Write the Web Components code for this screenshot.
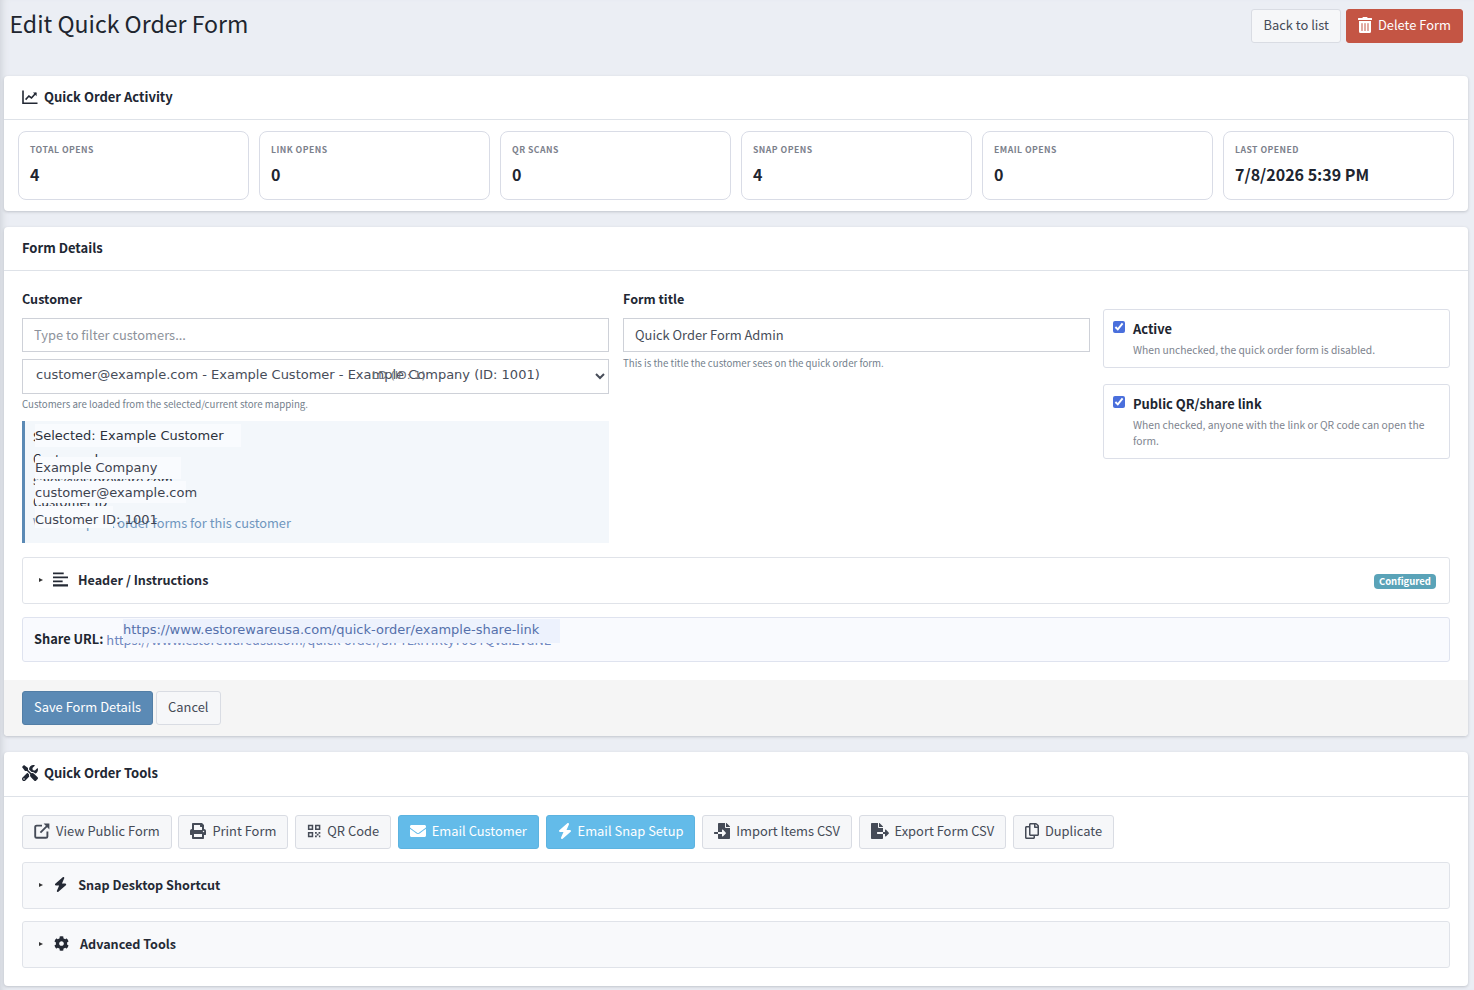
<!DOCTYPE html>
<html lang="en">
<head>
<meta charset="utf-8">
<title>Edit Quick Order Form</title>
<style>
  html, body { margin: 0; padding: 0; background: #ebeef4; }
  body { font-family: "Noto Sans CJK SC", "Liberation Sans", sans-serif; color: #212733; font-size: 13px; }
</style>
</head>
<body>

<qo-page>
  <span slot="title">Edit Quick Order Form</span>
  <qo-btn slot="actions">Back to list</qo-btn>
  <qo-btn slot="actions" variant="danger" icon="trash">Delete Form</qo-btn>

  <qo-card heading="Quick Order Activity" icon="chart" compact>
    <qo-stats>
      <qo-stat label="Total opens" value="4"></qo-stat>
      <qo-stat label="Link opens" value="0"></qo-stat>
      <qo-stat label="QR scans" value="0"></qo-stat>
      <qo-stat label="Snap opens" value="4"></qo-stat>
      <qo-stat label="Email opens" value="0"></qo-stat>
      <qo-stat label="Last opened" value="7/8/2026 5:39 PM"></qo-stat>
    </qo-stats>
  </qo-card>

  <qo-card heading="Form Details">
    <qo-form-details></qo-form-details>
    <qo-fold label="Header / Instructions" icon="align" tone="plain" badge="Configured"></qo-fold>
    <qo-share></qo-share>
    <qo-btn slot="footer" variant="primary">Save Form Details</qo-btn>
    <qo-btn slot="footer">Cancel</qo-btn>
  </qo-card>

  <qo-card heading="Quick Order Tools" icon="tools" last>
    <qo-toolbar>
      <qo-btn icon="external">View Public Form</qo-btn>
      <qo-btn icon="print">Print Form</qo-btn>
      <qo-btn icon="qr">QR Code</qo-btn>
      <qo-btn variant="info" icon="mail">Email Customer</qo-btn>
      <qo-btn variant="info" icon="bolt">Email Snap Setup</qo-btn>
      <qo-btn icon="import">Import Items CSV</qo-btn>
      <qo-btn icon="export">Export Form CSV</qo-btn>
      <qo-btn icon="copy">Duplicate</qo-btn>
    </qo-toolbar>
    <qo-fold label="Snap Desktop Shortcut" icon="bolt"></qo-fold>
    <qo-fold label="Advanced Tools" icon="cog" last></qo-fold>
  </qo-card>
</qo-page>

<script>
const ICONS = {
  trash: ['0 0 448 512', '<path d="M32 464a48 48 0 0 0 48 48h288a48 48 0 0 0 48-48V128H32zm272-256a16 16 0 0 1 32 0v224a16 16 0 0 1-32 0zm-96 0a16 16 0 0 1 32 0v224a16 16 0 0 1-32 0zm-96 0a16 16 0 0 1 32 0v224a16 16 0 0 1-32 0zM432 32H312l-9.4-18.7A24 24 0 0 0 281.1 0H166.8a23.72 23.72 0 0 0-21.4 13.3L136 32H16A16 16 0 0 0 0 48v32a16 16 0 0 0 16 16h416a16 16 0 0 0 16-16V48a16 16 0 0 0-16-16z"/>'],
  chart: ['0 0 16 16', '<path d="M1 1.5v12.7h14.5" fill="none" stroke="currentColor" stroke-width="1.6"/><path d="M3.6 10.6l3.3-3.6 2.6 2 4.4-5" fill="none" stroke="currentColor" stroke-width="1.6"/><path d="M11 3.6h3.6v3.6z"/>'],
  tools: ['0 0 512 512', '<path d="M501.1 395.7L384 278.6c-23.1-23.1-57.6-27.6-85.4-13.9L192 158.1V96L64 0 0 64l96 128h62.1l106.6 106.6c-13.6 27.8-9.2 62.3 13.9 85.4l117.1 117.1c14.6 14.6 38.2 14.6 52.7 0l52.7-52.7c14.5-14.6 14.5-38.2 0-52.7zM331.7 225c28.3 0 54.9 11 74.9 31l19.4 19.4c15.8-6.9 30.8-16.5 43.8-29.5 37.1-37.1 49.7-89.3 37.9-136.7-2.2-9-13.5-12.1-20.1-5.5l-74.4 74.4-67.9-11.3L334 98.9l74.4-74.4c6.6-6.6 3.4-17.9-5.7-20.2-47.4-11.7-99.6.9-136.6 37.9-28.5 28.5-41.9 66.1-41.2 103.6l82.1 82.1c8.1-1.9 16.5-2.9 24.7-2.9zm-103.9 82l-56.7-56.7L18.7 402.8c-25 25-25 65.5 0 90.5s65.5 25 90.5 0l123.6-123.6c-7.6-19.9-9.9-41.6-5-62.7zM64 472c-13.2 0-24-10.8-24-24 0-13.3 10.7-24 24-24s24 10.7 24 24c0 13.2-10.7 24-24 24z"/>'],
  external: ['0 0 16 16', '<path d="M8 2.6H2.6a1.4 1.4 0 0 0-1.4 1.4v9.4a1.4 1.4 0 0 0 1.4 1.4H12a1.4 1.4 0 0 0 1.4-1.4V8.6" fill="none" stroke="currentColor" stroke-width="1.9"/><path d="M6.4 9.6l7-7" fill="none" stroke="currentColor" stroke-width="1.9"/><path d="M9.6.6h5.8v5.8z"/>'],
  print: ['0 0 512 512', '<path d="M448 192V77.25c0-8.49-3.37-16.62-9.37-22.63L393.37 9.37c-6-6-14.14-9.37-22.63-9.37H96C78.33 0 64 14.33 64 32v160c-35.35 0-64 28.65-64 64v112c0 8.84 7.16 16 16 16h48v96c0 17.67 14.33 32 32 32h320c17.67 0 32-14.33 32-32v-96h48c8.84 0 16-7.16 16-16V256c0-35.35-28.65-64-64-64zm-64 256H128v-96h256v96zm0-224H128V64h192v48c0 8.84 7.16 16 16 16h48v96zm48 72c-13.25 0-24-10.75-24-24 0-13.26 10.75-24 24-24s24 10.74 24 24c0 13.25-10.75 24-24 24z"/>'],
  qr: ['0 -1 16 18', '<path fill-rule="evenodd" d="M1 1h6v6H1zm1.7 1.7v2.6h2.6V2.7zM9 1h6v6H9zm1.7 1.7v2.6h2.6V2.7zM1 9h6v6H1zm1.7 1.7v2.6h2.6v-2.6z"/><path d="M9 9h2v2H9zM11 11h2v2h-2zM13 9h2v2h-2zM9 13h2v2H9zM13.4 13H15v2h-1.6z"/>'],
  mail: ['0 0 512 512', '<path d="M502.3 190.8c3.9-3.1 9.7-.2 9.7 4.7V400c0 26.5-21.5 48-48 48H48c-26.5 0-48-21.5-48-48V195.6c0-5 5.7-7.8 9.7-4.7 22.4 17.4 52.1 39.5 154.1 113.6 21.1 15.4 56.7 47.8 92.2 47.6 35.7.3 72-32.8 92.3-47.6 102-74.1 131.6-96.3 154-113.7zM256 320c23.2.4 56.6-29.2 73.4-41.4 132.7-96.3 142.8-104.7 173.4-128.7 5.8-4.5 9.2-11.5 9.2-18.9v-19c0-26.5-21.5-48-48-48H48C21.5 64 0 85.5 0 112v19c0 7.4 3.4 14.3 9.2 18.9 30.6 23.9 40.7 32.4 173.4 128.7 16.8 12.2 50.2 41.8 73.4 41.4z"/>'],
  bolt: ['0 0 448 512', '<path d="M349.4 44.6c5.9-13.7 1.5-29.7-10.6-38.5s-28.6-8-39.9 1.8l-256 224c-10 8.8-13.6 22.9-8.9 35.3S50.7 288 64 288H175.5L98.6 467.4c-5.9 13.7-1.5 29.7 10.6 38.5s28.6 8 39.9-1.8l256-224c10-8.8 13.6-22.9 8.9-35.3s-16.6-20.7-30-20.7H272.5L349.4 44.6z"/>'],
  import: ['0 0 512 512', '<path d="M16 288c-8.8 0-16 7.2-16 16v32c0 8.8 7.2 16 16 16h112v-64zm489-183L407.1 7c-4.5-4.5-10.6-7-17-7H384v128h128v-6.1c0-6.3-2.5-12.4-7-16.9zm-153 31V0H152c-13.3 0-24 10.7-24 24v264h128v-65.2c0-14.3 17.3-21.4 27.4-11.3L379 308c6.6 6.7 6.6 17.4 0 24l-95.7 96.4c-10.1 10.1-27.4 3-27.4-11.3V352H128v136c0 13.3 10.7 24 24 24h336c13.3 0 24-10.7 24-24V160H376c-13.2 0-24-10.8-24-24z"/>'],
  export: ['0 0 576 512', '<path d="M384 121.9c0-6.3-2.5-12.4-7-16.9L279.1 7c-4.5-4.5-10.6-7-17-7H256v128h128zM571 308l-95.7-96.4c-10.1-10.1-27.4-3-27.4 11.3V288h-64v64h64v65.2c0 14.3 17.3 21.4 27.4 11.3L571 332c6.6-6.6 6.6-17.4 0-24zm-379 28v-32c0-8.8 7.2-16 16-16h176V160H248c-13.2 0-24-10.8-24-24V0H24C10.7 0 0 10.7 0 24v464c0 13.3 10.7 24 24 24h336c13.3 0 24-10.7 24-24V352H208c-8.8 0-16-7.2-16-16z"/>'],
  copy: ['0 0 448 512', '<path d="M433.941 65.941l-51.882-51.882A48 48 0 0 0 348.118 0H176c-26.51 0-48 21.49-48 48v48H48c-26.51 0-48 21.49-48 48v320c0 26.51 21.49 48 48 48h224c26.51 0 48-21.49 48-48v-48h80c26.51 0 48-21.49 48-48V99.882a48 48 0 0 0-14.059-33.941zM266 464H54a6 6 0 0 1-6-6V150a6 6 0 0 1 6-6h74v224c0 26.51 21.49 48 48 48h96v42a6 6 0 0 1-6 6zm128-96H182a6 6 0 0 1-6-6V54a6 6 0 0 1 6-6h106v88c0 13.255 10.745 24 24 24h88v202a6 6 0 0 1-6 6zm6-256h-64V48h9.632c1.591 0 3.117.632 4.243 1.757l48.368 48.368a6 6 0 0 1 1.757 4.243V112z"/>'],
  cog: ['0 0 512 512', '<path d="M487.4 315.7l-42.6-24.6c4.3-23.2 4.3-47 0-70.2l42.6-24.6c4.9-2.8 7.1-8.6 5.5-14-11.1-35.6-30-67.8-54.7-94.6-3.8-4.1-10-5.1-14.8-2.3L380.8 110c-17.9-15.4-38.5-27.3-60.8-35.1V25.8c0-5.6-3.9-10.5-9.4-11.7-36.7-8.2-74.3-7.8-109.2 0-5.5 1.2-9.4 6.1-9.4 11.7V75c-22.2 7.9-42.8 19.8-60.8 35.1L88.7 85.5c-4.9-2.8-11-1.9-14.8 2.3-24.7 26.7-43.6 58.9-54.7 94.6-1.7 5.4.6 11.2 5.5 14L67.3 221c-4.3 23.2-4.3 47 0 70.2l-42.6 24.6c-4.9 2.8-7.1 8.6-5.5 14 11.1 35.6 30 67.8 54.7 94.6 3.8 4.1 10 5.1 14.8 2.3l42.6-24.6c17.9 15.4 38.5 27.3 60.8 35.1v49.2c0 5.6 3.9 10.5 9.4 11.7 36.7 8.2 74.3 7.8 109.2 0 5.5-1.2 9.4-6.1 9.4-11.7v-49.2c22.2-7.9 42.8-19.8 60.8-35.1l42.6 24.6c4.9 2.8 11 1.9 14.8-2.3 24.7-26.7 43.6-58.9 54.7-94.6 1.5-5.5-.7-11.3-5.6-14.1zM256 336c-44.1 0-80-35.9-80-80s35.9-80 80-80 80 35.9 80 80-35.9 80-80 80z"/>'],
  align: ['0 0 14 14', '<path d="M0 .5h10v1.6H0zM0 4.2h14v1.6H0zM0 7.9h9v1.6H0zM0 11.5h14v2H0z"/>']
};

// width follows the icon's own viewBox, height is the size given
function icon(name, size) {
  const [box, body] = ICONS[name];
  const [, , w, h] = box.split(' ').map(Number);
  return `<svg viewBox="${box}" width="${(size * w / h).toFixed(2)}" height="${size}" fill="currentColor" aria-hidden="true">${body}</svg>`;
}

/** Base class: sets up an open shadow root from the html() result. */
class QoElement extends HTMLElement {
  connectedCallback() {
    if (this.shadowRoot) return;
    this.attachShadow({ mode: 'open' });
    this.shadowRoot.innerHTML = this.html();
  }
}

class QoPage extends QoElement {
  html() {
    return `
      <style>
        :host { display: block; padding: 0 6px 4px 4px; box-shadow: inset 8px 0 8px -7px #c9ccd3; min-height: 986px; }
        header { display: flex; justify-content: space-between; height: 76px; }
        h1 { margin: 4px 0 0 5.5px; font-size: 23.1px; font-weight: 400; line-height: 38px; color: #20252f; }
        .actions { display: flex; gap: 5px; margin: 9px 5px 0 0; align-items: flex-start; }
      </style>
      <header>
        <h1><slot name="title"></slot></h1>
        <div class="actions"><slot name="actions"></slot></div>
      </header>
      <slot></slot>`;
  }
}

class QoCard extends QoElement {
  html() {
    const ic = this.getAttribute('icon');
    return `
      <style>
        :host { display: block; background: #fff; border-radius: 4px; box-shadow: 0 1px 3px rgba(40,45,60,.22); margin-bottom: 16px; overflow: hidden; }
        :host([last]) { margin-bottom: 0; }
        header { display: flex; align-items: center; gap: 6px; height: 41px; padding: 0 18px 2px; border-bottom: 1px solid #dee2e8; font-weight: 700; font-size: 13px; line-height: 20px; color: #212733; }
        :host([last]) header { height: 42px; }
        header svg { display: block; }
        main { padding: 18px 18px 18px; }
        :host([compact]) main { padding: 11px 14px 11px; }
        footer { display: flex; gap: 3px; background: #f5f5f5; padding: 11px 18px; }
        footer:not(.on) { display: none; }
      </style>
      <header>${ic ? icon(ic, 16) : ''}<span>${this.getAttribute('heading')}</span></header>
      <main><slot></slot></main>
      <footer class="${this.querySelector('[slot=footer]') ? 'on' : ''}"><slot name="footer"></slot></footer>`;
  }
}

class QoBtn extends QoElement {
  html() {
    const ic = this.getAttribute('icon');
    return `
      <style>
        :host { display: inline-block; }
        button { display: flex; align-items: center; gap: 6px; height: 34px; box-sizing: border-box; padding: 0 11px 2px; font: inherit; font-size: 12.9px; line-height: 20px; cursor: pointer;
                 background: #f6f7f9; color: #454b57; border: 1px solid #d9dce3; border-radius: 3px; white-space: nowrap; }
        :host([variant=danger]) button { background: #c45544; border-color: #c45544; color: #fff; }
        :host([variant=primary]) button { background: #5b8ab5; border-color: #527ea6; color: #fff; }
        :host([variant=info]) button { background: #63bbe9; border-color: #5cb3e0; color: #fff; }
        svg { display: block; }
      </style>
      <button>${ic ? icon(ic, 16) : ''}<slot></slot></button>`;
  }
}

class QoStats extends QoElement {
  html() {
    return `<style>:host { display: grid; grid-template-columns: repeat(6, 1fr); gap: 10px; }</style><slot></slot>`;
  }
}

class QoStat extends QoElement {
  html() {
    return `
      <style>
        :host { display: block; box-sizing: border-box; height: 69px; padding: 11px 11px; background: #fff; border: 1px solid #d9dce6; border-radius: 8px; }
        .k { font-size: 8.7px; line-height: 14px; font-weight: 700; letter-spacing: .45px; text-transform: uppercase; color: #7c818c; }
        .v { margin-top: 5px; font-size: 16px; line-height: 24px; font-weight: 700; color: #20252f; }
      </style>
      <div class="k">${this.getAttribute('label')}</div>
      <div class="v">${this.getAttribute('value')}</div>`;
  }
}

class QoFormDetails extends QoElement {
  html() {
    return `
      <style>
        :host { display: grid; grid-template-columns: 601px 480px 347px; margin-bottom: 14px; }
        .a { padding-right: 14px; }
        .b { padding-right: 13px; }
        .c { padding-top: 20px; display: flex; flex-direction: column; gap: 16px; }
        label { display: block; font-size: 12.6px; font-weight: 600; line-height: 20px; margin-bottom: 9px; color: #212733; }
        input[type=text], select { display: block; width: 100%; box-sizing: border-box; height: 34px; font: inherit; font-size: 12.9px; padding: 0 11px 2px; color: #474d59;
                 border: 1px solid #ced1d8; background: #fff; border-radius: 0; outline: none; }
        input::placeholder { color: #8d929b; opacity: 1; }
        .sel { position: relative; margin-top: 7px; }
        select { height: 35px; font-family: "DejaVu Sans", sans-serif; font-size: 13px; padding: 0 9px 5px; }
        .residual { position: absolute; left: 350px; top: 10px; font-family: "DejaVu Sans", sans-serif; font-size: 11.2px; line-height: 14px; color: #6a6f79; }
        .hint { font-size: 9.7px; line-height: 16px; color: #73808c; margin: 2px 0 1px; }
        .selected { position: relative; box-sizing: border-box; height: 122px; margin-top: 9px; padding: 5px 0 0 8px; border-left: 3px solid #5b8ab5; background: #f3f7fb; font-size: 13px; line-height: 21.5px; color: #2b303b; overflow: hidden; }
        .selected div { height: 21.5px; white-space: nowrap; }
        .selected a { color: #6f96be; text-decoration: none; font-size: 12.8px; }
        .patch { position: absolute; left: 10px; height: 22px; background: #f9fbfe; font-family: "DejaVu Sans", sans-serif; font-size: 13px; line-height: 22px; color: #3d4350; white-space: nowrap; }
      </style>
      <div class="a">
        <label>Customer</label>
        <input type="text" placeholder="Type to filter customers...">
        <div class="sel">
          <select><option>customer@example.com - Example Customer - Example Company (ID: 1001)</option></select>
          <span class="residual">LD (ID: 1)</span>
        </div>
        <div class="hint">Customers are loaded from the selected/current store mapping.</div>
        <div class="selected">
          <div><b>Selected: Customer</b></div>
          <div>Customer Inc</div>
          <div>sales@estoreware.com</div>
          <div>Customer ID</div>
          <div><a>View all quick order forms for this customer</a></div>
          <span class="patch" style="top:3px;width:206px;height:23px;line-height:24px;color:#2c313c">Selected: Example Customer</span>
          <span class="patch" style="top:36px;width:146px">Example Company</span>
          <span class="patch" style="top:60px;width:151px;line-height:24px">customer@example.com</span>
          <span class="patch" style="top:85px;width:78px;line-height:28px">Customer ID: 1001</span>
        </div>
      </div>
      <div class="b">
        <label>Form title</label>
        <input type="text" value="Quick Order Form Admin">
        <div class="hint" style="margin-top:3px">This is the title the customer sees on the quick order form.</div>
      </div>
      <div class="c">
        <qo-check label="Active" note="When unchecked, the quick order form is disabled."></qo-check>
        <qo-check label="Public QR/share link" note="When checked, anyone with the link or QR code can open the form."></qo-check>
      </div>`;
  }
}

class QoCheck extends QoElement {
  html() {
    return `
      <style>
        :host { display: flex; gap: 8px; box-sizing: border-box; padding: 9px 9px 10px 9px; background: #fff; border: 1px solid #dcdfe8; border-radius: 3px; }
        input { width: 12px; height: 12px; margin: 2px 0 0 0; accent-color: #4a6fdc; flex: none; }
        .t { font-size: 12.9px; line-height: 20px; font-weight: 600; color: #20252f; }
        .n { margin-top: 3px; font-size: 10.3px; line-height: 15.3px; color: #7d838e; }
      </style>
      <input type="checkbox" checked>
      <div><div class="t">${this.getAttribute('label')}</div><div class="n">${this.getAttribute('note')}</div></div>`;
  }
}

class QoFold extends QoElement {
  html() {
    const badge = this.getAttribute('badge');
    return `
      <style>
        :host { display: block; margin-bottom: 12px; }
        :host([last]) { margin-bottom: 0; }
        :host([tone=plain]) { margin-bottom: 13px; }
        details { box-sizing: border-box; height: 47px; background: #f8f9fb; border: 1px solid #e0e3e9; border-radius: 3px; }
        :host([tone=plain]) details { background: #fff; }
        summary { display: flex; align-items: center; height: 43px; list-style: none; padding: 0 13px 2px 16px; font-size: 12.6px; font-weight: 600; line-height: 20px; color: #252a35; cursor: pointer; }
        summary::-webkit-details-marker { display: none; }
        .tri { width: 0; height: 0; border-left: 4px solid #333; border-top: 2.5px solid transparent; border-bottom: 2.5px solid transparent; margin-right: 11px; }
        :host([tone=plain]) .tri { margin-right: 10px; }
        svg { display: block; margin-right: 11px; }
        :host([tone=plain]) svg { margin-right: 10px; }
        .badge { margin-left: auto; margin-top: 3px; background: #5aa3b8; color: #fff; font-size: 9.5px; font-weight: 700; line-height: 15px; padding: 0 5px; border-radius: 4px; }
      </style>
      <details>
        <summary><span class="tri"></span>${icon(this.getAttribute('icon'), 15)}<span>${this.getAttribute('label')}</span>${badge ? `<span class="badge">${badge}</span>` : ''}</summary>
      </details>`;
  }
}

class QoShare extends QoElement {
  html() {
    return `
      <style>
        :host { display: flex; align-items: center; position: relative; box-sizing: border-box; height: 45px; padding: 0 11px; background: #f9fafe; border: 1px solid #dfe3ef; border-radius: 3px; font-size: 12.9px; overflow: hidden; white-space: nowrap; }
        b { font-weight: 700; font-size: 12.8px; color: #20252f; margin: 0 3px 2px 0; }
        a { color: #6f87c0; }
        .patch { position: absolute; left: 100px; top: 1px; width: 437px; height: 24px; background: #edf2fd; color: #5470ab; font-family: "DejaVu Sans", sans-serif; font-size: 13px; line-height: 22px; }
      </style>
      <b>Share URL:</b> <a>https://www.estorewareusa.com/quick-order/3h-YLxrHRtyY0OTQvaiZVdNE</a>
      <span class="patch">https://www.estorewareusa.com/quick-order/example-share-link</span>`;
  }
}

class QoToolbar extends QoElement {
  html() {
    return `<style>:host { display: flex; gap: 6.7px; margin-bottom: 13px; }</style><slot></slot>`;
  }
}

customElements.define('qo-page', QoPage);
customElements.define('qo-card', QoCard);
customElements.define('qo-btn', QoBtn);
customElements.define('qo-stats', QoStats);
customElements.define('qo-stat', QoStat);
customElements.define('qo-check', QoCheck);
customElements.define('qo-form-details', QoFormDetails);
customElements.define('qo-fold', QoFold);
customElements.define('qo-share', QoShare);
customElements.define('qo-toolbar', QoToolbar);
</script>
</body>
</html>
